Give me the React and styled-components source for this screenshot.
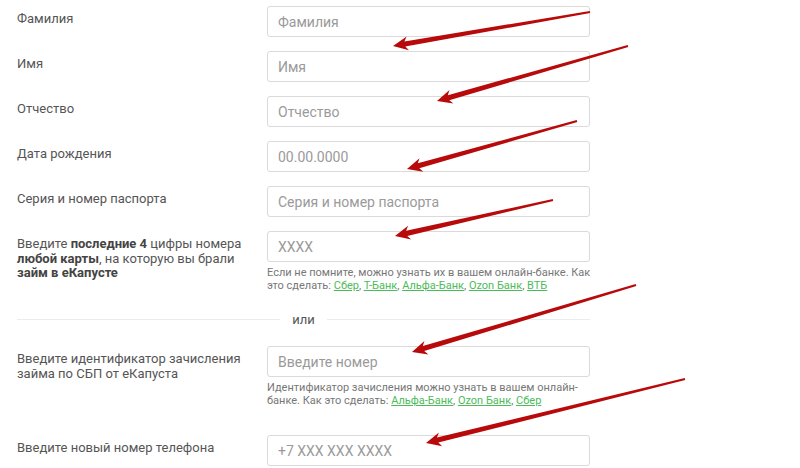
import React from "react";
import styled, { createGlobalStyle } from "styled-components";

const GlobalStyle = createGlobalStyle`
  html, body {
    margin: 0;
    padding: 0;
    background: #fff;
  }
  body {
    font-family: Roboto, "Noto Sans", Arial, sans-serif;
    color: #555;
  }
`;

const arrows = [
  { from: [590, 12], to: [393, 46] },
  { from: [628, 46], to: [437, 101] },
  { from: [577, 121], to: [407, 169] },
  { from: [553, 200], to: [395, 236] },
  { from: [636, 285], to: [412, 352] },
  { from: [685, 379], to: [426, 443] },
];

const arrowPoints = ({ from, to }) => {
  const [tx, ty] = from;
  const [hx, hy] = to;
  const len = Math.hypot(hx - tx, hy - ty);
  const dx = (hx - tx) / len;
  const dy = (hy - ty) / len;
  const nx = -dy;
  const ny = dx;
  const headLen = 12;
  const bx = hx - dx * headLen;
  const by = hy - dy * headLen;
  const pt = (x, y) => `${x.toFixed(1)},${y.toFixed(1)}`;
  return [
    pt(tx + nx * 1, ty + ny * 1),
    pt(bx + nx * 2.6, by + ny * 2.6),
    pt(bx - dx * 3 + nx * 7, by - dy * 3 + ny * 7),
    pt(hx, hy),
    pt(bx - dx * 3 - nx * 7, by - dy * 3 - ny * 7),
    pt(bx - nx * 2.6, by - ny * 2.6),
    pt(tx - nx * 1, ty - ny * 1),
  ].join(" ");
};

const Page = styled.div`
  position: relative;
  width: 800px;
  height: 468px;
  overflow: hidden;
  padding: 6px 0 0 17px;
  box-sizing: border-box;
`;

const Form = styled.div`
  width: 573px;
  display: flex;
  flex-direction: column;
`;

const Row = styled.div`
  display: grid;
  grid-template-columns: 250px 323px;
  margin-bottom: ${(p) => p.$mb ?? 14}px;
`;

const Label = styled.div`
  font-size: 13px;
  line-height: 14.5px;
  color: #555;
  padding-top: 6px;
  padding-right: 14px;

  b {
    color: #444;
    font-weight: 700;
  }
`;

const Field = styled.div`
  display: flex;
  flex-direction: column;
`;

const Input = styled.input`
  box-sizing: border-box;
  width: 323px;
  height: 31px;
  border: 1px solid #dadada;
  border-radius: 3px;
  padding: 0 10px;
  font-family: Roboto, "Noto Sans", Arial, sans-serif;
  font-size: 14px;
  color: #444;
  outline: none;
  background: #fff;

  &::placeholder {
    color: #9a9a9a;
  }
`;

const Hint = styled.div`
  margin-top: 4px;
  margin-right: -10px;
  font-size: 11px;
  line-height: 13px;
  color: #777;
`;

const BankLink = styled.a`
  color: #4cbb5a;
  text-decoration: underline;
`;

const Divider = styled.div`
  display: flex;
  align-items: center;
  gap: 12px;
  height: 14px;
  margin-bottom: 20px;
  font-size: 13px;
  color: #555;

  &::before,
  &::after {
    content: "";
    flex: 1;
    height: 1px;
    background: #ececec;
  }
`;

const Overlay = styled.svg`
  position: absolute;
  left: 0;
  top: 0;
  pointer-events: none;
`;

const Links = ({ names }) =>
  names.map((name, i) => (
    <React.Fragment key={name}>
      <BankLink href="#">{name}</BankLink>
      {i < names.length - 1 ? ", " : ""}
    </React.Fragment>
  ));

const simple = [
  ["Фамилия", "Фамилия"],
  ["Имя", "Имя"],
  ["Отчество", "Отчество"],
  ["Дата рождения", "00.00.0000"],
  ["Серия и номер паспорта", "Серия и номер паспорта"],
];

const App = () => {
  return (
    <Page>
      <GlobalStyle />
      <Form>
        {simple.map(([label, ph]) => (
          <Row key={label}>
            <Label>{label}</Label>
            <Field>
              <Input placeholder={ph} />
            </Field>
          </Row>
        ))}

        <Row $mb={20}>
          <Label>
            Введите <b>последние 4</b> цифры номера <b>любой карты</b>, на
            которую вы брали <b>займ в еКапусте</b>
          </Label>
          <Field>
            <Input placeholder="XXXX" />
            <Hint>
              Если не помните, можно узнать их в вашем онлайн-банке. Как это
              сделать:{" "}
              <Links names={["Сбер", "Т-Банк", "Альфа-Банк", "Ozon Банк", "ВТБ"]} />
            </Hint>
          </Field>
        </Row>

        <Divider>или</Divider>

        <Row $mb={28}>
          <Label>Введите идентификатор зачисления займа по СБП от еКапуста</Label>
          <Field>
            <Input placeholder="Введите номер" />
            <Hint>
              Идентификатор зачисления можно узнать в вашем онлайн-банке. Как
              это сделать: <Links names={["Альфа-Банк", "Ozon Банк", "Сбер"]} />
            </Hint>
          </Field>
        </Row>

        <Row>
          <Label>Введите новый номер телефона</Label>
          <Field>
            <Input placeholder="+7 XXX XXX XXXX" />
          </Field>
        </Row>
      </Form>

      <Overlay width="800" height="468" viewBox="0 0 800 468">
        {arrows.map((a, i) => (
          <polygon key={i} points={arrowPoints(a)} fill="#b80a0a" />
        ))}
      </Overlay>
    </Page>
  );
};

export default App;
